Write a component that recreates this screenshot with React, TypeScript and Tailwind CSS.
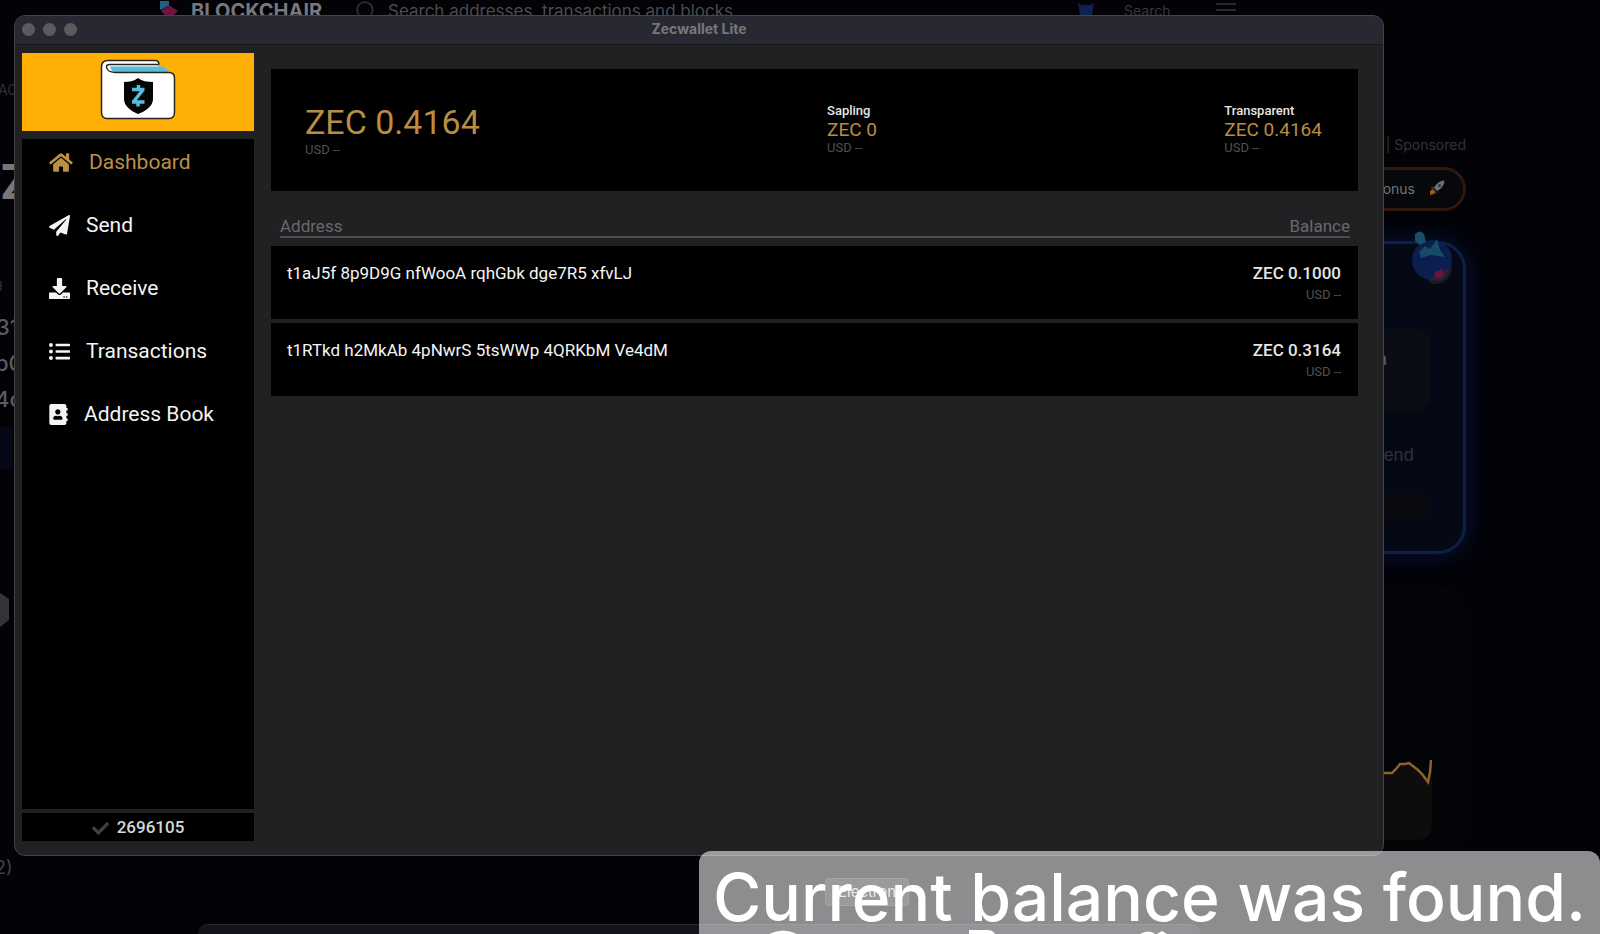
import { FaHome, FaPaperPlane, FaDownload, FaListUl, FaAddressBook, FaCheck } from "react-icons/fa";

const navItems = [
  { label: "Dashboard", Icon: FaHome, iconClass: "w-6", active: true },
  { label: "Send", Icon: FaPaperPlane, iconClass: "w-[21px]", active: false },
  { label: "Receive", Icon: FaDownload, iconClass: "w-[21px]", active: false },
  { label: "Transactions", Icon: FaListUl, iconClass: "w-[21px]", active: false },
  { label: "Address Book", Icon: FaAddressBook, iconClass: "w-[19px]", active: false },
];

const addresses = [
  { address: "t1aJ5f 8p9D9G nfWooA rqhGbk dge7R5 xfvLJ", balance: "ZEC 0.1000" },
  { address: "t1RTkd h2MkAb 4pNwrS 5tsWWp 4QRKbM Ve4dM", balance: "ZEC 0.3164" },
];

function WalletLogo() {
  return (
    <svg viewBox="0 0 76 62" className="h-[62px] w-[76px]" aria-hidden="true">
      <path
        d="M1.500 8 Q1.500 1.500 8 1.500 H55 Q59 1.500 59 4 L58 6 H63 Q67 8 69 13 Q74.500 13 74.500 19 V53 Q74.500 59.500 69 59.500 H7 Q1.500 59.500 1.500 53 Z"
        fill="#fff"
      />
      <path d="M59 5 L75 0 V14 L69 13 L65 8 H58 Z" fill="#ffb007" />
      <path d="M10 7.500 H63 Q67 8.500 69 13 H16 Q11 12.500 10 7.500 Z" fill="#58bcdc" />
      <path
        d="M59 5.500 Q59 1.500 55 1.500 H8 Q1.500 1.500 1.500 8 V53 Q1.500 59.500 7 59.500 H69 Q74.500 59.500 74.500 53 V19 Q74.500 13.500 69 13.500 H15 Q7 13 6.500 8 Q6 5.500 10 5.500 H59"
        fill="none"
        stroke="#2b2419"
        strokeWidth="1.500"
      />
      <path d="M38 19 C34 22 29 23 24 23 V40 C24 47 31 52 38 55 C46 52 53 47 53 40 V23 C47 23 42 22 38 19 Z" fill="#050505" />
      <path d="M32 30.500 H44.500 M42.500 31.500 L34 42 M32 43 H44.500 M38.500 26 V30 M38 43 V47.500" fill="none" stroke="#58bcdc" strokeWidth="3.500" />
    </svg>
  );
}

function Rocket() {
  return (
    <svg viewBox="0 0 16 16" className="h-4 w-4" aria-hidden="true">
      <path d="M15.500 .5 C10 1 7 4 5 8 L8 11 C12 9 15 6 15.500 .5 Z" fill="#6e7075" />
      <path d="M6 6 L1 8 L4 9 Z M8 12 L7 15 L10 10 Z" fill="#5b3211" />
      <path d="M4 9 L1 11 L1 15 L5 14 L7 12 Z" fill="#9b5a14" />
      <circle cx="10.500" cy="5.500" r="1.500" fill="#34363c" />
    </svg>
  );
}

function BlockchairHeader() {
  return (
    <header className="absolute inset-x-0 top-0 flex h-[22px] items-center overflow-hidden pl-[158px]">
      <svg viewBox="0 0 24 20" className="h-5 w-6 shrink-0" aria-hidden="true">
        <path d="M2 0 H11 V4 L3 9 L2 8 Z" fill="#1f5f80" />
        <path d="M3 10 L11 4 L20 10 L15 15 H8 Z" fill="#6d1440" />
      </svg>
      <a href="#home" className="ml-[9px] w-[155px] font-['Inter'] text-[20px] leading-5 font-bold text-[#77777c]">
        BLOCKCHAIR
      </a>
      <label className="flex w-[730px] items-center gap-3 pl-[10px]">
        <svg viewBox="0 0 18 18" className="h-5 w-5 shrink-0" fill="none" stroke="#303034" strokeWidth="1.500" aria-hidden="true">
          <circle cx="8" cy="8" r="7" />
        </svg>
        <input
          type="text"
          aria-label="Search"
          placeholder="Search addresses, transactions and blocks"
          className="w-full bg-transparent font-['Inter'] text-[17px] leading-5 outline-none placeholder:text-[#4c4c50]"
        />
      </label>
      <svg viewBox="0 0 20 20" className="h-5 w-5" aria-hidden="true">
        <path d="M2 2 L6 4 H14 L18 2 L16 13 L18 17 H2 L4 13 Z" fill="#0e2250" />
      </svg>
      <button type="button" className="ml-7 font-['Inter'] text-[14px] leading-5 text-[#38383c]">
        Search
      </button>
      <button type="button" aria-label="Menu" className="ml-[46px] flex h-[18px] w-5 flex-col gap-1 pt-px">
        <span className="h-0.5 w-full bg-[#29292d]" />
        <span className="h-0.5 w-full bg-[#29292d]" />
      </button>
    </header>
  );
}

function LeftPage() {
  return (
    <div className="absolute top-0 left-0 h-full w-[15px] overflow-hidden font-['Inter'] text-[#5b5b60]">
      <span className="absolute top-[82px] -left-[2px] text-[14px] leading-4 text-[#303035]">AC</span>
      <span className="absolute top-[160px] left-0 text-[48px] leading-[44px] font-bold text-[#77777b]">Z</span>
      <span className="absolute top-[278px] -left-[7px] text-[13px] leading-4 text-[#303035]">H</span>
      <span className="absolute top-[315px] -left-[4px] text-[22px] leading-6 font-medium">31</span>
      <span className="absolute top-[351px] -left-[5px] text-[22px] leading-6 font-medium">b0</span>
      <span className="absolute top-[387px] -left-[5px] text-[22px] leading-6 font-medium">4c</span>
      <span className="absolute top-[427px] left-0 h-[42px] w-3 bg-[#050817]" />
      <svg viewBox="0 0 10 34" className="absolute top-[593px] left-0 h-[34px] w-[10px]" aria-hidden="true">
        <path d="M0 0 L9 6 V27 L0 34 Z" fill="#343437" />
      </svg>
      <span className="absolute top-[856px] -left-[5px] text-[18px] leading-6 text-[#424246]">2)</span>
    </div>
  );
}

function Mascot() {
  return (
    <svg viewBox="0 0 42 54" className="absolute -top-[14px] right-[10px] h-[54px] w-[42px]" aria-hidden="true">
      <path d="M22 54 Q40 54 41 36 L30 36 L14 48 Z" fill="#1e1a24" />
      <circle cx="21" cy="30" r="20" fill="#0b1e4d" />
      <path d="M4 4 Q9 -1 13 4 L15 12 L9 15 L4 11 Z" fill="#174f6d" />
      <path d="M8 22 L14 16 L19 19 L26 9 L29 20 L34 27 L20 25 L10 28 Z" fill="#174a68" />
      <path d="M18 49 Q26 46 38 38 Q36 50 26 51 Z" fill="#2a2242" />
      <path d="M24 42 L31 39 L33 45 L28 49 L23 46 Z" fill="#6c123c" />
    </svg>
  );
}

function RightPage() {
  return (
    <aside className="absolute top-0 right-[134px] flex w-[300px] flex-col items-end pt-[135px] font-['Inter']">
      <p className="text-[14px] leading-5 text-[#333337]">Advertisement | Sponsored</p>
      <a href="#bonus" className="mt-3 flex h-11 w-full items-center justify-end gap-[14px] rounded-full border-[3px] border-[#32170c] bg-[#07080b] pr-[18px] pb-0.5 text-[14px] text-[#747478]">
        Bonus
        <Rocket />
      </a>
      <div className="relative mt-[30px] h-[313px] w-full rounded-[28px] border-[3px] border-[#0d204d] bg-[#050916] shadow-[0_0_26px_2px_#061333]">
        <Mascot />
        <div className="flex flex-col items-end pt-[85px] pr-8">
          <div className="flex h-[82px] w-[180px] items-start justify-end rounded-2xl bg-[#0b0d14] pt-4 pr-[44px]">
            <span className="text-[18px] leading-7 font-medium text-[#5b5b60]">n</span>
          </div>
          <p className="mt-8 pr-[17px] text-[17px] leading-6 text-[#323237]">Send</p>
          <div className="mt-[26px] h-[26px] w-[180px] rounded-full bg-[#090a10]" />
        </div>
      </div>
      <div className="mt-8 flex h-[270px] w-full flex-col items-end rounded-3xl bg-[#020408] pt-[170px] pr-[34px]">
        <svg viewBox="0 0 60 90" className="h-[90px] w-[60px]" aria-hidden="true">
          <path d="M0 18 L12 17 L20 17 L28 8 L37 7 L46 14 L56 26 L60 5 V68 Q60 84 44 84 H0 Z" fill="#0e0c0c" />
          <path d="M0 18 L12 17 L20 17 L24 13 L28 8 L33 8 L37 7 L46 14 L50 18 L56 26 L58 16 L59 4" fill="none" stroke="#8c6228" strokeWidth="2.500" />
        </svg>
      </div>
    </aside>
  );
}

function Sidebar() {
  return (
    <div className="flex w-[232px] shrink-0 flex-col">
      <div className="flex h-[78px] items-center justify-center bg-[#ffb007] pb-1">
        <WalletLogo />
      </div>
      <nav className="mt-2 flex-1 bg-black pt-2">
        <ul className="flex flex-col gap-[33px]">
          {navItems.map(({ label, Icon, iconClass, active }) => (
            <li key={label}>
              <a
                href={"#" + label}
                className={
                  active
                    ? "flex h-[30px] items-center gap-4 pl-[27px] text-[21px] text-[#bb9047]"
                    : "flex h-[30px] items-center gap-4 pl-[27px] text-[21px] text-[#f4f4f4]"
                }
              >
                <Icon className={iconClass} />
                <span className="pt-0.5">{label}</span>
              </a>
            </li>
          ))}
        </ul>
      </nav>
      <div className="mt-1 flex h-7 items-center justify-center gap-2 bg-black pt-0.5 text-[17px] font-medium text-[#d8d8d8]">
        <FaCheck className="text-[#414143]" />
        2696105
      </div>
    </div>
  );
}

function Amount({ title, value }: { title: string; value: string }) {
  return (
    <div>
      <h2 className="text-[13px] leading-4 font-medium text-[#e6e6e6]">{title}</h2>
      <p className="text-[19px] leading-[21px] text-[#b98d42]">{value}</p>
      <p className="text-[13px] leading-4 text-[#505053]">USD --</p>
    </div>
  );
}

function Dashboard() {
  return (
    <main className="min-w-0 flex-1 pt-4 pr-[25px] pl-[17px]">
      <section className="flex h-[122px] items-center justify-between bg-black pr-9 pb-0.5 pl-[34px]">
        <div className="pt-0.5">
          <p className="text-[34px] leading-10 text-[#b98d42]">ZEC 0.4164</p>
          <p className="text-[13px] leading-4 text-[#505053]">USD --</p>
        </div>
        <Amount title="Sapling" value="ZEC 0" />
        <Amount title="Transparent" value="ZEC 0.4164" />
      </section>
      <table className="mt-[19px] w-full border-separate border-spacing-x-0 border-spacing-y-1 text-[17px]">
        <thead>
          <tr className="text-[#69696c]">
            <th className="p-0 pb-1 pl-[9px] text-left font-normal">
              <div className="border-b-2 border-[#4b4b4e] pt-0.5 leading-5">Address</div>
            </th>
            <th className="p-0 pr-2 pb-1 text-right font-normal">
              <div className="border-b-2 border-[#4b4b4e] pt-0.5 leading-5">Balance</div>
            </th>
          </tr>
        </thead>
        <tbody>
          {addresses.map((row) => (
            <tr key={row.address} className="h-[73px] bg-black">
              <td className="p-0 pt-4 pl-4 align-top leading-[22px] text-[#f4f4f4]">{row.address}</td>
              <td className="p-0 pt-4 pr-[17px] text-right align-top">
                <p className="leading-[22px] font-medium text-[#e6e6e6]">{row.balance}</p>
                <p className="text-[13px] leading-[22px] text-[#505053]">USD --</p>
              </td>
            </tr>
          ))}
        </tbody>
      </table>
    </main>
  );
}

function WalletWindow() {
  return (
    <div className="relative mt-[15px] mr-[216px] ml-[14px] flex h-[calc(100vh-93px)] flex-col overflow-hidden rounded-[11px] border border-[#444447] bg-[#212123] font-['Roboto']">
      <div className="relative flex h-[29px] shrink-0 items-center justify-center border-b border-[#18181c] bg-[#282833]">
        <div className="absolute left-[7px] flex gap-2 pb-0.5">
          <span className="h-[13px] w-[13px] rounded-full bg-[#5b5b5e]" />
          <span className="h-[13px] w-[13px] rounded-full bg-[#5b5b5e]" />
          <span className="h-[13px] w-[13px] rounded-full bg-[#5b5b5e]" />
        </div>
        <h1 className="pb-0.5 font-['Inter'] text-[14px] leading-4 font-bold text-[#77777b]">Zecwallet Lite</h1>
      </div>
      <div className="flex min-h-0 flex-1 pt-2 pb-[14px] pl-[7px]">
        <Sidebar />
        <Dashboard />
      </div>
    </div>
  );
}

function Dock() {
  return (
    <>
      <div className="absolute bottom-7 left-[825px] rounded border border-[#39393c] bg-[#202023] px-3 font-['Inter'] text-[15px] leading-[26px] text-[#d5d5d5]">
        Electron
      </div>
      <div className="absolute right-[400px] bottom-0 left-[198px] h-[10px] rounded-t-[20px] border-t border-[#28282e] bg-[#12131b]" />
    </>
  );
}

function Caption() {
  return (
    <div className="absolute right-0 bottom-0 h-[83px] w-[901px] overflow-hidden rounded-t-[12px] bg-white/55 pt-[6px] text-center font-['Inter'] text-[66px] leading-[80px] font-medium whitespace-nowrap text-white">
      Current balance was found.
      <svg viewBox="0 0 901 4" className="absolute bottom-0 left-0 h-1 w-full" aria-hidden="true">
        <path d="M70 4 Q84 -3 98 4 Z M270 0 H288 Q294 0 296 4 H270 Z M441 4 Q450 -1 456 4 Z M458 4 L463 1 L468 4 Z" fill="#fff" />
      </svg>
    </div>
  );
}

export default function App() {
  return (
    <div className="relative flow-root min-h-screen overflow-hidden bg-[#020207]">
      <BlockchairHeader />
      <LeftPage />
      <RightPage />
      <WalletWindow />
      <Dock />
      <Caption />
    </div>
  );
}
